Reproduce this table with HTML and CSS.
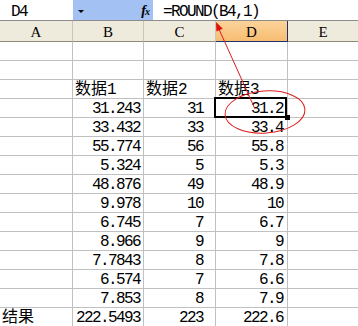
FILE: index.html
```html
<!DOCTYPE html>
<html>
<head>
<meta charset="utf-8">
<link rel="stylesheet" href="styles.css">
</head>
<body>
<div class="app">
  <div class="fbar">
    <div class="namebox">D4</div>
    <div class="fbtns"><span class="dd"></span><span class="fx"><i>f</i><span class="x">x</span></span></div>
    <div class="formula">=ROUND(B4,1)</div>
  </div>
  <div class="grid">
    <div class="hd">A</div><div class="hd">B</div><div class="hd">C</div><div class="hd hsel">D</div><div class="hd">E</div>

    <div class="c"></div><div class="c"></div><div class="c"></div><div class="c"></div><div class="c"></div>
    <div class="c"></div><div class="c"></div><div class="c"></div><div class="c"></div><div class="c"></div>

    <div class="c"></div><div class="c">数据1</div><div class="c">数据2</div><div class="c">数据3</div><div class="c"></div>

    <div class="c"></div><div class="c n">31.243</div><div class="c n cc">31</div><div class="c n cd">31.2</div><div class="c"></div>
    <div class="c"></div><div class="c n">33.432</div><div class="c n cc">33</div><div class="c n cd">33.4</div><div class="c"></div>
    <div class="c"></div><div class="c n">55.774</div><div class="c n cc">56</div><div class="c n cd">55.8</div><div class="c"></div>
    <div class="c"></div><div class="c n">5.324</div><div class="c n cc">5</div><div class="c n cd">5.3</div><div class="c"></div>
    <div class="c"></div><div class="c n">48.876</div><div class="c n cc">49</div><div class="c n cd">48.9</div><div class="c"></div>
    <div class="c"></div><div class="c n">9.978</div><div class="c n cc">10</div><div class="c n cd">10</div><div class="c"></div>
    <div class="c"></div><div class="c n">6.745</div><div class="c n cc">7</div><div class="c n cd">6.7</div><div class="c"></div>
    <div class="c"></div><div class="c n">8.966</div><div class="c n cc">9</div><div class="c n cd">9</div><div class="c"></div>
    <div class="c"></div><div class="c n">7.7843</div><div class="c n cc">8</div><div class="c n cd">7.8</div><div class="c"></div>
    <div class="c"></div><div class="c n">6.574</div><div class="c n cc">7</div><div class="c n cd">6.6</div><div class="c"></div>
    <div class="c"></div><div class="c n">7.853</div><div class="c n cc">8</div><div class="c n cd">7.9</div><div class="c"></div>

    <div class="c">结果</div><div class="c n">222.5493</div><div class="c n cc">223</div><div class="c n cd">222.6</div><div class="c"></div>
  </div>

  <div class="selbox"></div>
  <div class="handle"></div>

  <svg class="anno" width="358" height="326" viewBox="0 0 358 326">
    <ellipse cx="265" cy="112" rx="40" ry="21" transform="rotate(-4 265 112)" fill="none" stroke="#dc1c1c" stroke-width="1"/>
    <line x1="218" y1="27" x2="255" y2="109" stroke="#dc1c1c" stroke-width="1"/>
    <polygon points="216,22 222.8,28.8 216.4,31.6" fill="#e01010"/>
  </svg>
</div>
</body>
</html>
```

FILE: styles.css
```css
html, body {
  margin: 0;
  padding: 0;
  background: #fff;
}

body {
  width: 358px;
  height: 326px;
  overflow: hidden;
  font-family: "Liberation Mono", "Noto Sans CJK SC", monospace;
  font-size: 16px;
  color: #000;
}

.app {
  position: relative;
  width: 358px;
  height: 326px;
  overflow: hidden;
}

.fbar {
  display: flex;
  height: 21px;
  box-sizing: border-box;
  border-bottom: 1px solid #8c8c8c;
}

.namebox {
  width: 73px;
  box-sizing: border-box;
  padding: 4px 0 0 11px;
  line-height: 16px;
  letter-spacing: -1.6px;
  background: #fff;
}

.fbtns {
  width: 80px;
  background: #a4c1f3;
  display: flex;
  align-items: flex-start;
}

.dd {
  width: 0;
  height: 0;
  margin: 10px 0 0 5px;
  border-left: 3px solid transparent;
  border-right: 3px solid transparent;
  border-top: 3px solid #000;
}

.fx {
  margin: 1px 3px 0 auto;
  font-family: "Liberation Serif", serif;
  font-weight: bold;
  line-height: 18px;
  letter-spacing: 0;
}

.fx i {
  font-size: 14px;
}

.fx .x {
  font-size: 10px;
  font-style: italic;
  margin-left: -1px;
}

.formula {
  flex: 1;
  padding: 4px 0 0 10px;
  line-height: 16px;
  letter-spacing: -1.6px;
  white-space: nowrap;
}

.grid {
  display: grid;
  grid-template-columns: 73px 71px 72px 72px 71px;
  grid-template-rows: 21px;
  grid-auto-rows: 19px;
}

.hd {
  box-sizing: border-box;
  background: #eeebdd;
  border-right: 1px solid #c9c6b6;
  border-bottom: 1px solid #8e8b7c;
  text-align: center;
  padding-top: 3px;
  font-family: "Liberation Serif", serif;
  font-size: 15px;
  line-height: 16px;
  overflow: hidden;
}

.hsel {
  background: linear-gradient(#fbd39a, #f7bd72);
  border-right-color: #1e2f6a;
  border-bottom-color: #1e2f6a;
}

.c {
  box-sizing: border-box;
  border-right: 1px solid #c0c0c0;
  border-bottom: 1px solid #c0c0c0;
  padding: 3px 3px 0 2px;
  line-height: 14px;
  white-space: nowrap;
  overflow: hidden;
}

.n {
  text-align: right;
  letter-spacing: -1.6px;
}

.cc {
  padding-right: 12px;
}

.cd {
  padding-right: 4px;
}

.selbox {
  position: absolute;
  left: 214px;
  top: 97px;
  width: 73px;
  height: 21px;
  box-sizing: border-box;
  border: 2px solid #000;
}

.handle {
  position: absolute;
  left: 285px;
  top: 115px;
  width: 5px;
  height: 5px;
  background: #000;
}

.anno {
  position: absolute;
  left: 0;
  top: 0;
}
```
